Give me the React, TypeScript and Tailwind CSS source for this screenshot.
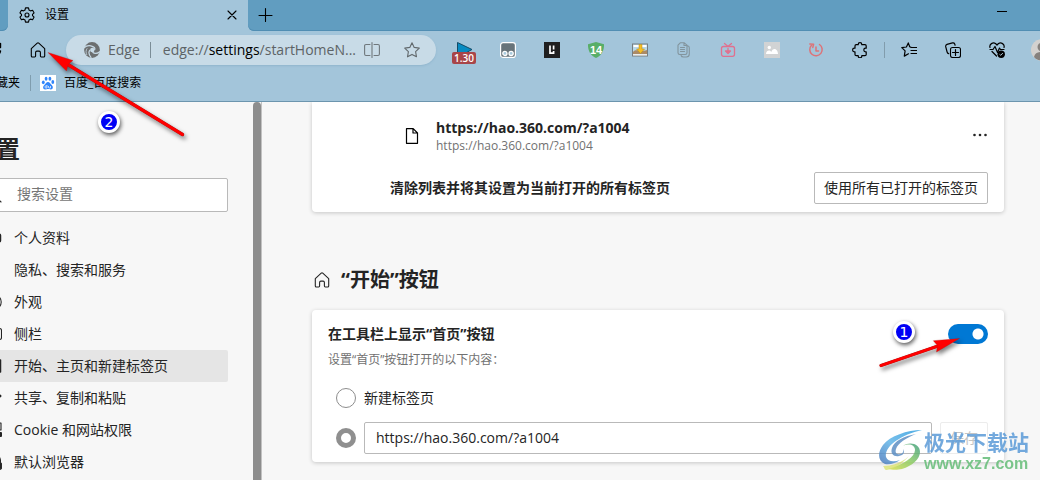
import type { ReactNode } from "react";

const EDGE_TOOL = "flex w-11 shrink-0 items-center justify-center";

function Icon({ size = 16, children, className = "", box = 16 }: { size?: number; box?: number; children: ReactNode; className?: string }) {
  return (
    <svg width={size} height={size} viewBox={`0 0 ${box} ${box}`} fill="none" stroke="currentColor" strokeWidth="1.1" strokeLinecap="round" strokeLinejoin="round" className={`shrink-0 ${className}`} aria-hidden="true">
      {children}
    </svg>
  );
}

function HomeIcon() {
  return (
    <Icon>
      <path d="M1.3 6.7 7.2 1.2q.8-.7 1.6 0l5.9 5.5V14q0 1-1 1h-2.4q-.9 0-.9-.9V10.400q0-1.300-1.300-1.300H6.900q-1.300 0-1.300 1.300V14.100q0 .9-.9.9H2.300q-1 0-1-1Z" />
    </Icon>
  );
}

function GearIcon() {
  return (
    <Icon>
      <circle cx="8" cy="8" r="2" />
      <path d="M6.500 .9h3l.5 2.100 1.500.9 2.100-.6 1.500 2.600-1.600 1.500v1.200l1.600 1.500-1.500 2.600-2.100-.6-1.500.9-.5 2.100h-3L6 13l-1.500-.9-2.100.6L.9 10.100l1.600-1.500V7.400L.9 5.900l1.500-2.600 2.100.6L6 3Z" />
    </Icon>
  );
}

function EdgeMark() {
  return (
    <svg width="16" height="16" viewBox="0 0 16 16" className="shrink-0" aria-hidden="true">
      <circle cx="8" cy="8" r="7.900" fill="#6c6f70" />
      <circle cx="8.300" cy="8" r="2.200" fill="#c8dbe7" />
      <path d="M0 5.700C2.500 3.600 6 3.300 8.800 4.600c2 .9 2.500 2 1.700 3.400M6.100 7.800C4.500 9.500 4.600 12.500 7.300 15.800" fill="none" stroke="#c8dbe7" strokeWidth="1.200" />
      <path d="M8.500 10.200c2 1.500 5 1.500 7.700-.8" fill="none" stroke="#c8dbe7" strokeWidth="1.300" />
      <path d="M3.200 6.300C1.800 8 1.700 10.800 2.900 13" fill="none" stroke="#c8dbe7" strokeWidth=".8" />
    </svg>
  );
}

function Badge({ n, place }: { n: number; place: string }) {
  return (
    <span className={`absolute flex size-[22px] items-center justify-center rounded-full border-[3px] border-white bg-[#0000f5] font-['DejaVu_Sans'] text-[14px] leading-none text-white shadow-[1px_2px_4px_rgba(0,0,0,0.65)] ${place}`}>
      {n}
    </span>
  );
}

function TopBar() {
  return (
    <header className="shrink-0 overflow-hidden border-b border-[#6c95ae] bg-[#a3c5da] text-black">
      <div className="flex h-[31px] text-xs">
        <div className="w-2 rounded-br-md bg-[#619dc0] shadow-[inset_0_-1px_0_#518eb3]" />
        <div className="flex w-60 items-center pr-2.5 pb-0.5 pl-[11px]">
          <GearIcon />
          <span className="ml-2.5 flex-1">设置</span>
          <button aria-label="关闭标签页" className="flex size-3 items-center justify-center">
            <Icon size={12} box={12}><path d="M2 2l8 8M10 2l-8 8" /></Icon>
          </button>
        </div>
        <div className="flex flex-1 items-center justify-between rounded-bl-md bg-[#619dc0] pr-[33px] pb-0.5 pl-[9px] shadow-[inset_0_-1px_0_#518eb3]">
          <button aria-label="新建标签页"><Icon><path d="M8.500 1.500v13M2 8.500h13" /></Icon></button>
          <button aria-label="最小化" className="mb-2">
            <svg width="10" height="10" aria-hidden="true"><path d="M0 5.500h10" stroke="#000" /></svg>
          </button>
        </div>
      </div>

      <div className="flex h-[38px] items-center">
        <button aria-label="刷新" className="-ml-3.5 shrink-0">
          <Icon><path d="M14.500 1.500v4h-4M14 5A6.500 6.500 0 1 0 14.500 9" strokeWidth="1.400" /></Icon>
        </button>
        <button aria-label="主页" className="ml-7 shrink-0"><HomeIcon /></button>
        <div className="ml-5 flex h-[30px] min-w-0 flex-1 items-center rounded-full bg-[#c8dbe7] pr-4 pl-[18px] text-[#5d6366] shadow-[0_1px_2px_rgba(90,140,170,0.25)]">
          <EdgeMark />
          <span className="ml-2 text-sm">Edge</span>
          <span className="mx-3 ml-2.5 h-4 w-px shrink-0 bg-[#7b8d97]" />
          <div role="textbox" aria-label="地址栏" className="min-w-0 flex-1 overflow-hidden text-sm whitespace-nowrap">
            edge://<span className="text-black">settings</span>/startHomeN...
          </div>
          <button aria-label="分屏" className="ml-1 shrink-0 text-[#6f777c]">
            <Icon><path d="M6 2.500H2q-1.400 0-1.400 1.400v8.200q0 1.400 1.400 1.400h4M10 2.500h4q1.400 0 1.400 1.400v8.200q0 1.400-1.400 1.400h-4M8 .6v14.800" /></Icon>
          </button>
          <button aria-label="收藏" className="ml-6 shrink-0 text-[#62696d]">
            <Icon><path d="m8 .8 2.200 4.600 5.100.7-3.700 3.600.9 5.100L8 12.400l-4.500 2.400.9-5.100L.7 6.100l5.100-.7Z" /></Icon>
          </button>
        </div>
        <div className="ml-1.5 flex shrink-0 items-center">
          <button aria-label="播放速度" className={`${EDGE_TOOL} relative h-8`}>
            <svg width="24" height="24" aria-hidden="true"><path d="M5.500 4.500v15L20 11.500Z" fill="#078bc2" stroke="#144b67" /></svg>
            <span className="absolute bottom-0.5 left-2.5 h-3 w-6 rounded-[2px] bg-[#a84549] text-center text-[10px] leading-3 font-semibold text-white">1.30</span>
          </button>
          <button aria-label="脚本管理" className={EDGE_TOOL}>
            <svg width="16" height="16" aria-hidden="true">
              <rect x=".6" y=".6" width="14.800" height="14.800" rx="2.500" fill="#68747a" stroke="#fff" strokeWidth="1.200" />
              <circle cx="4.900" cy="11.400" r="2.100" fill="#a8cadd" stroke="#fff" strokeWidth="1.300" />
              <circle cx="11.100" cy="11.400" r="2.100" fill="#a8cadd" stroke="#fff" strokeWidth="1.300" />
            </svg>
          </button>
          <button aria-label="阅读扩展" className={EDGE_TOOL}>
            <svg width="16" height="16" aria-hidden="true"><path d="M0 0h16v16H0Z" fill="#202020" /><path d="M6 3.500v7.700h3.600V9M9.600 3.500v4" stroke="#fff" strokeWidth="1.700" fill="none" /></svg>
          </button>
          <button aria-label="广告拦截" className={EDGE_TOOL}>
            <span className="relative flex size-4 items-center justify-center">
              <svg width="16" height="16" aria-hidden="true" className="absolute"><path d="M8 0 16 2.200c.2 6-2 10.800-8 13.800C2 13-.2 8.200 0 2.200Z" fill="#58ae68" /></svg>
              <b className="relative font-['Liberation_Sans'] text-[11px] leading-none text-white">14</b>
            </span>
          </button>
          <button aria-label="图片下载" className={EDGE_TOOL}>
            <svg width="16" height="14" aria-hidden="true">
              <rect x=".5" y="1" width="15" height="12" fill="#b9d8e8" stroke="#777e80" />
              <path d="M1.500 2h13v2h-13Z" fill="#fff" /><path d="M1 9c4-4 5 1 14-2v5.500H1Z" fill="#ab8b66" /><path d="M1 11h14v1.500H1Z" fill="#e8eef0" />
              <path d="M7 1.500h3V6h2.500l-4 4.500-4-4.500H7Z" fill="#f5bf25" stroke="#b88a13" strokeWidth=".5" />
            </svg>
          </button>
          <button aria-label="复制" className={`${EDGE_TOOL} text-[#82949d]`}>
            <Icon><path d="M4.500 .7h3.500L11 3.200v7.600q0 1.700-1.700 1.700H3.700Q2 12.500 2 10.800V3.200ZM8 .8v2.700H11M4.500 5.500h4M4.500 7.500h4M4.500 9.500h4M11.500 3.700q1.800.3 1.800 2V12q0 3-3 3H7.500q-2 0-2.400-1.500" /></Icon>
          </button>
          <button aria-label="视频下载" className={`${EDGE_TOOL} text-[#e0718f]`}>
            <Icon><g strokeWidth="1.300"><rect x="1.500" y="4.500" width="13" height="9.800" rx="2" /><path d="m4.500 1.500 3 2.500M11.500 1.500 8.500 4M8 6.500v4M5.500 9 8 11.500 10.500 9Z" fill="currentColor" /></g></Icon>
          </button>
          <button aria-label="图片工具" className={EDGE_TOOL}>
            <svg width="16" height="16" aria-hidden="true"><path d="M0 0h16v16H0Z" fill="#d1d3d4" /><circle cx="5.300" cy="5.500" r="1.700" fill="#fff" /><path d="M2 12c0-2.500 1.700-3.500 3-3.500 1.200 0 1.800.7 2.300 1.500C8 8 9 7 10.500 7c2 0 3.500 2.500 3.500 5Z" fill="#fff" /></svg>
          </button>
          <button aria-label="历史扩展" className={`${EDGE_TOOL} text-[#dd7378]`}>
            <Icon><path d="M3.500 3.300A6.200 6.200 0 1 0 11.500 2.500M1.800 2l3.800.2-.8 3.200M8 5v4h2.500" strokeWidth="1.500" /></Icon>
          </button>
          <button aria-label="扩展" className={EDGE_TOOL}>
            <Icon><path d="M3 5.500V3.900q0-1.200 1.200-1.200H6.200V2.400a1.800 1.800 0 0 1 3.600 0v.3h3.200q1.200 0 1.200 1.200V6.200h-.6a1.800 1.800 0 0 0 0 3.600h.6v2.700q0 1.200-1.200 1.200H9.800v.3a1.800 1.800 0 0 1-3.600 0v-.3H4.200q-1.200 0-1.200-1.200V9.800h-.6a1.800 1.800 0 0 1 0-3.600H3Z" strokeWidth="1.200" /></Icon>
          </button>
          <span className="mx-0.5 h-4 w-px bg-[#819cac]" />
          <button aria-label="收藏夹" className={EDGE_TOOL}>
            <Icon><path d="M10.500 5.500 8.700 4.700 7.300.9 5.400 5 .8 5.600l3.300 3.300-.8 5.200 4.200-2.300M10 5.500h5.500M10 8.500h5.500M10 11.500h5.500" strokeWidth="1.200" /></Icon>
          </button>
          <button aria-label="集锦" className={EDGE_TOOL}>
            <Icon><rect x="5.500" y="5.500" width="10" height="10" rx="2" /><path d="M10.500 7.500v6M7.500 10.500h6M3.700 11.600Q2.500 11.500 2.100 10L.7 4.700Q.4 3 2 2.400L7.500.9q1.600-.4 2.200 1l.4 1.300" strokeWidth="1.200" /></Icon>
          </button>
          <button aria-label="浏览器概要" className={EDGE_TOOL}>
            <Icon><path d="M1 5.500C0 2 4 0 6.500 1.500L8 3l1.500-1.500C12 0 16 2 15 5.500M1 7.500h3l2-3 2.500 6L10.500 6l1 1.500H15M3 9.500 7.500 14" strokeWidth="1.200" /><circle cx="12.200" cy="12.200" r="3.700" fill="#000" stroke="none" /><path d="m10.800 12.500 1 .8 1.800-2" stroke="#b8d2e0" strokeWidth=".9" /></Icon>
          </button>
          <button aria-label="个人资料" className="w-[21px] overflow-hidden pl-3">
            <svg width="22" height="22" aria-hidden="true"><circle cx="11" cy="11" r="11" fill="#d3d1cf" /><circle cx="11" cy="8" r="4.500" fill="#85817e" /><path d="M3 18c1-4 4-5 8-5s7 1 8 5c-4 4-12 5-16 0Z" fill="#85817e" /></svg>
          </button>
        </div>
      </div>

      <nav className="flex h-8 items-center pb-1 text-xs">
        <a href="#favorites" className="-ml-4 shrink-0">收藏夹</a>
        <span className="ml-2.5 h-4 w-px bg-[#7f9dae]" />
        <a href="#baidu" className="ml-[9px] flex items-center gap-2">
          <svg width="16" height="16" aria-hidden="true">
            <path d="M0 0h16v16H0Z" fill="#fff" />
            <g fill="#3186fb"><ellipse cx="3.300" cy="7.300" rx="1.400" ry="1.900" /><ellipse cx="6.100" cy="3.700" rx="1.400" ry="2" /><ellipse cx="9.900" cy="3.700" rx="1.400" ry="2" /><ellipse cx="12.800" cy="7" rx="1.400" ry="1.900" /><path d="M8 7c1.600 0 2.300 1.600 3.700 2.900 1.700 1.600 1.500 4.400-.9 4.500-1.300 0-2-.3-2.800-.3s-1.500.3-2.800.3c-2.400-.1-2.600-2.900-.9-4.500C5.700 8.600 6.400 7 8 7Z" /></g>
            <path d="M7 10v3H5.800q-.9-.1-.9-1t.9-1H7M8.500 11v1.500q0 .5.500.5h1.500v-2" fill="none" stroke="#fff" strokeWidth=".7" />
          </svg>
          百度_百度搜索
        </a>
      </nav>
    </header>
  );
}

const NAV: { label: string; icon: ReactNode; active?: boolean }[] = [
  { label: "个人资料", icon: <rect x="1" y="5" width="15.500" height="8" rx="1.500" strokeWidth="1.500" /> },
  { label: "隐私、搜索和服务", icon: <path d="M8 2 13 4v5q0 4-5 6-5-2-5-6V4Z" /> },
  { label: "外观", icon: <circle cx="10" cy="9" r="7.200" /> },
  { label: "侧栏", icon: <rect x="2" y="3.500" width="15.500" height="11" rx="2" /> },
  { label: "开始、主页和新建标签页", active: true, icon: <path d="M1 3h15.500v12H1ZM1 6h15" strokeWidth="1.500" /> },
  { label: "共享、复制和粘贴", icon: <path d="m12 2 5 5-5 5M16 7H8q-5 0-5 6" /> },
  { label: "Cookie 和网站权限", icon: <><rect x="2" y="2" width="15" height="7" /><path d="M11 12h6v3h-6Z" fill="currentColor" strokeWidth="2" /></> },
  { label: "默认浏览器", icon: <><circle cx="9" cy="8" r="7.500" /><circle cx="14.500" cy="13" r="3.500" fill="currentColor" /></> },
];

function Sidebar() {
  return (
    <aside className="flex w-[262px] shrink-0 overflow-hidden">
      <div className="-ml-7 flex-1 pt-[31px] pr-[25px]">
        <h1 className="text-2xl leading-8 font-bold">设置</h1>
        <label className="mt-[13px] flex h-[34px] items-center gap-[15px] rounded-[2px] border border-[#b9b9b9] bg-white pl-[13px]">
          <Icon size={16}><circle cx="7" cy="7" r="5" /><path d="m11 11 4 4" /></Icon>
          <input type="search" aria-label="搜索设置" placeholder="搜索设置" className="min-w-0 flex-1 bg-transparent pb-0.5 text-sm outline-none placeholder:text-[#767676]" />
        </label>
        <nav className="mt-2.5 text-sm">
          {NAV.map((item) => (
            <a key={item.label} href="#settings" className={`flex h-8 items-center gap-3 rounded-[2px] px-3 ${item.active ? "bg-[#e5e5e5]" : ""}`}>
              <Icon size={18} box={18}>{item.icon}</Icon>
              <span className="whitespace-nowrap">{item.label}</span>
            </a>
          ))}
        </nav>
      </div>
      <div className="w-[9px] border-r border-[#c2c2c2]">
        <div className="h-full rounded-t-full bg-[#8d8d8d]" />
      </div>
    </aside>
  );
}

const CARD = "bg-white shadow-[0_1px_4px_rgba(0,0,0,0.2)]";

function Settings() {
  return (
    <main className="min-w-0 flex-1 pr-9 pl-[50px]">
      <section className={`${CARD} rounded-b pt-4 pr-4 pb-2`}>
        <div className="flex items-center gap-4 pl-[92px]">
          <Icon className="text-black"><path d="M2.500 .7h6.700l4.300 4.300v10.300h-11ZM9 .9V5h4.300" strokeWidth="1.200" /></Icon>
          <div className="flex-1">
            <div className="text-sm leading-5 font-bold">https://hao.360.com/?a1004</div>
            <div className="text-xs leading-4 text-[#717171]">https://hao.360.com/?a1004</div>
          </div>
          <button aria-label="更多操作">
            <Icon><g fill="currentColor" stroke="none"><circle cx="2.500" cy="7" r="1.300" /><circle cx="8" cy="7" r="1.300" /><circle cx="13.500" cy="7" r="1.300" /></g></Icon>
          </button>
        </div>
        <div className="mt-[18px] flex items-center justify-between pl-[78px] text-sm">
          <span className="font-bold">清除列表并将其设置为当前打开的所有标签页</span>
          <button className="h-8 rounded-[2px] border border-[#b9b9b9] px-[9px]">使用所有已打开的标签页</button>
        </div>
      </section>

      <h2 className="flex items-center gap-[11px] pt-[54px] pb-4 pl-0.5 text-xl leading-7 font-bold">
        <HomeIcon />
        “开始”按钮
      </h2>

      <section className={`${CARD} rounded px-4 pt-3.5 pb-2 text-sm`}>
        <div className="flex items-center justify-between leading-5">
          <label htmlFor="show-home" className="font-bold">在工具栏上显示“首页”按钮</label>
          <input id="show-home" type="checkbox" role="switch" defaultChecked className="h-5 w-10 appearance-none rounded-full bg-[#0078d4] bg-[radial-gradient(circle_at_30px_10px,white_5px,transparent_6px)]" />
        </div>
        <p className="mt-1.5 text-xs leading-5 text-[#717171]">设置“首页”按钮打开的以下内容：</p>
        <label className="mt-3 flex h-8 items-center gap-2 pl-2">
          <input type="radio" name="home" className="size-5 appearance-none rounded-full border border-[#8d8d8d]" />
          新建标签页
        </label>
        <div className="mt-2 flex items-center gap-2 pl-2">
          <input type="radio" name="home" aria-label="自定义网址" defaultChecked className="size-5 appearance-none rounded-full border-[5px] border-[#8f8f8f]" />
          <input type="text" aria-label="网址" defaultValue="https://hao.360.com/?a1004" className="h-8 min-w-0 flex-1 rounded-[2px] border border-[#b9b9b9] px-[11px] pb-0.5" />
          <button disabled className="h-8 w-12 rounded-[2px] border border-[#ececec] text-[#c4c4c4]">保存</button>
        </div>
      </section>
    </main>
  );
}

function Annotations() {
  return (
    <div className="pointer-events-none">
      <svg width="160" height="104" viewBox="40 42 160 104" className="absolute top-[42px] left-10 drop-shadow-[2px_3px_2px_rgba(0,0,0,0.5)]" aria-hidden="true">
        <path d="M67 64 182.500 134.500" stroke="#b01010" strokeWidth="3.400" strokeLinecap="round" />
        <path d="M67 64 182.500 134.500" stroke="#f00" strokeWidth="2.800" strokeLinecap="round" />
        <path d="M48 52.500 73 60.500 68 64.500 66.500 71Z" fill="#f00" stroke="#b01010" strokeWidth=".3" />
      </svg>
      <Badge n={2} place="top-[111px] left-[98px]" />
      <svg width="100" height="46" viewBox="870 330 100 46" className="absolute top-[330px] right-[70px] drop-shadow-[2px_3px_2px_rgba(0,0,0,0.5)]" aria-hidden="true">
        <path d="M881 365.500 938 346" stroke="#b01010" strokeWidth="3.200" strokeLinecap="round" />
        <path d="M881 365.500 938 346" stroke="#f00" strokeWidth="2.600" strokeLinecap="round" />
        <path d="M959.500 338.500 933.300 340.700 937.500 345.500 936.500 352Z" fill="#f00" stroke="#b01010" strokeWidth=".3" />
      </svg>
      <Badge n={1} place="top-[321px] right-[125px]" />
      <div className="absolute top-[428px] right-1.5 flex items-center opacity-85">
        <svg width="46" height="44" viewBox="0 0 46 44" aria-hidden="true">
          <defs>
            <linearGradient id="swirlBlue" x1="1" y1="0" x2="0" y2="1"><stop stopColor="#2f9fe0" /><stop offset=".55" stopColor="#62b5e8" /><stop offset="1" stopColor="#4c78ba" /></linearGradient>
            <linearGradient id="swirlGreen" x1="1" y1="0" x2="0" y2="1"><stop stopColor="#3f9f83" /><stop offset=".5" stopColor="#8fcc62" /><stop offset="1" stopColor="#dbe04f" /></linearGradient>
          </defs>
          <path d="M44 2C29 2 12 8 5 17-1 25 0 33 7 36c5 1 11-1 15-4-6 2-12 2-14-3C6 19 22 7 44 2Z" fill="url(#swirlBlue)" />
          <path d="M38 6C26 8 16 13 14 20c-2 6 2 9 7 8 5-1 6-4 4-7 1 3-1 5-3 5-4 1-5-2-4-5 2-6 10-11 20-15Z" fill="#5d8fc4" />
          <path d="M25 18c6-3 12-1 12 4 0 7-11 14-27 19 4 1 10 1 14 0 10-3 18-10 18-17 0-8-10-11-17-6Z" fill="url(#swirlGreen)" />
          <path d="M5 38c8 0 19-3 26-10-6 7-13 12-22 14-3 0-2-2-4-4Z" fill="#d6e05a" opacity=".8" />
        </svg>
        <div className="w-[110px] font-bold">
          <div className="text-[21px] leading-7 whitespace-nowrap text-[#5b9bd8]">极光下载站</div>
          <div className="font-['Liberation_Sans'] text-[16px] leading-4 text-[#65bd78]">www.xz7.com</div>
        </div>
      </div>
    </div>
  );
}

export default function App() {
  return (
    <div className="relative flex h-screen flex-col overflow-hidden bg-[#f7f7f7] font-['Open_Sans','Noto_Sans_CJK_SC',sans-serif] text-[#242424]">
      <TopBar />
      <div className="flex min-h-0 flex-1 overflow-hidden">
        <Sidebar />
        <Settings />
      </div>
      <Annotations />
    </div>
  );
}
